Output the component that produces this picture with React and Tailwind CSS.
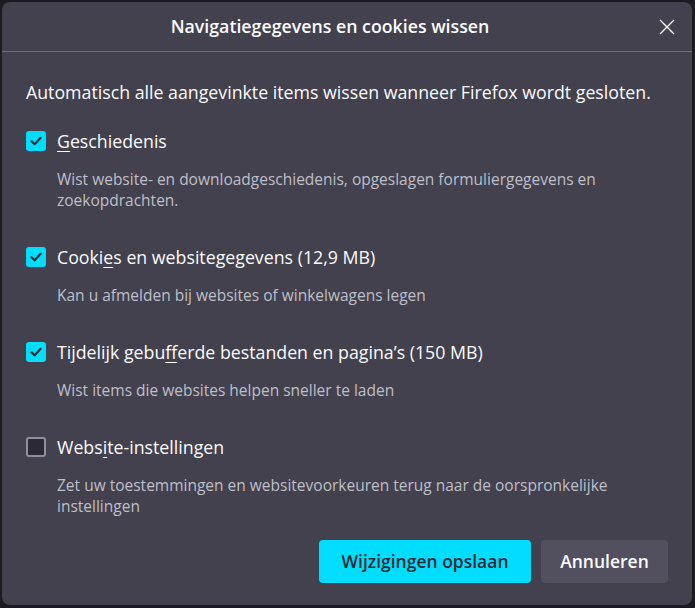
import React, { useState } from 'react';

const font = { fontFamily: '"Open Sans", "Noto Sans", sans-serif' };

const items = [
  {
    id: 'history',
    label: ['', 'G', 'eschiedenis'],
    desc: 'Wist website- en downloadgeschiedenis, opgeslagen formuliergegevens en zoekopdrachten.',
    checked: true,
  },
  {
    id: 'cookies',
    label: ['Cooki', 'e', 's en websitegegevens (12,9 MB)'],
    desc: 'Kan u afmelden bij websites of winkelwagens legen',
    checked: true,
  },
  {
    id: 'cache',
    label: ['Tijdelijk gebu', 'f', 'ferde bestanden en pagina’s (150 MB)'],
    desc: 'Wist items die websites helpen sneller te laden',
    checked: true,
  },
  {
    id: 'siteSettings',
    label: ['Webs', 'i', 'te-instellingen'],
    desc: 'Zet uw toestemmingen en websitevoorkeuren terug naar de oorspronkelijke instellingen',
    checked: false,
  },
];

const CheckBox = ({ checked }) =>
  checked ? (
    <span className="flex h-5 w-5 shrink-0 items-center justify-center rounded-[3px] bg-[#00ddff]">
      <svg width="14" height="14" viewBox="0 0 14 14" fill="none">
        <path d="M2.5 7.2 5.6 10.2 11.6 3.8" stroke="#2b2a33" strokeWidth="2.2" strokeLinecap="round" strokeLinejoin="round" />
      </svg>
    </span>
  ) : (
    <span className="h-5 w-5 shrink-0 rounded-[3px] border-2 border-[#8f8f9d] bg-[#2b2a33]" />
  );

const ClearDialog = () => {
  const [state, setState] = useState(
    Object.fromEntries(items.map((i) => [i.id, i.checked]))
  );

  const toggle = (id) => setState((s) => ({ ...s, [id]: !s[id] }));

  return (
    <div className="flex h-[603px] flex-col rounded-lg bg-[#42414d] text-[#fbfbfe]">
      {/* Header */}
      <div className="flex h-[50px] items-center border-b border-[#6f6e79]">
        <h1 className="flex-1 pl-2 text-center text-[17.75px] font-semibold">
          Navigatiegegevens en cookies wissen
        </h1>
        <button className="mr-2 flex h-[34px] w-[34px] items-center justify-center text-[#fbfbfe]">
          <svg width="18" height="18" viewBox="0 0 18 18" fill="none">
            <path d="M2 2 16 16M16 2 2 16" stroke="currentColor" strokeWidth="1.4" />
          </svg>
        </button>
      </div>

      <div className="flex flex-1 flex-col px-6 pt-[28px] pb-[22px]">
        <p className="text-[17.75px] leading-6">
          Automatisch alle aangevinkte items wissen wanneer Firefox wordt gesloten.
        </p>

        <div className="mt-[25px] flex flex-col gap-[34px]">
          {items.map((item) => (
            <div key={item.id}>
              <label className="flex cursor-pointer items-center gap-[11px]" onClick={() => toggle(item.id)}>
                <CheckBox checked={state[item.id]} />
                <span className="text-[17.75px] leading-6">
                  {item.label[0]}
                  <span className="underline decoration-1 underline-offset-[3px]">{item.label[1]}</span>
                  {item.label[2]}
                </span>
              </label>
              <p className="mt-[16px] pl-[31px] pr-6 text-[15.5px] leading-[21px] text-[#bfbfc9]">
                {item.desc}
              </p>
            </div>
          ))}
        </div>

        <div className="mt-auto flex justify-end gap-[10px]">
          <button className="h-[43px] w-[212px] rounded-[4px] bg-[#00ddff] text-[17.5px] font-semibold text-[#2b2a33]">
            Wijzigingen opslaan
          </button>
          <button className="h-[43px] w-[127px] rounded-[4px] bg-[#52505e] text-[17.5px] font-semibold text-[#fbfbfe]">
            Annuleren
          </button>
        </div>
      </div>
    </div>
  );
};

export default function App() {
  return (
    <div className="h-[608px] w-[695px] bg-[#1c1b22] p-[2px] pr-[3px]" style={font}>
      <ClearDialog />
    </div>
  );
}
